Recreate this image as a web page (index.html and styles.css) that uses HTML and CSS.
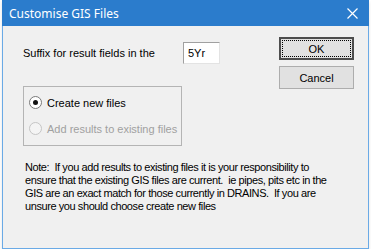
FILE: index.html
```html
<!DOCTYPE html>
<html lang="en">
<head>
  <meta charset="UTF-8" />
  <title>Customise GIS Files</title>
  <link rel="stylesheet" href="styles.css">
</head>
<body>

  <!-- DIALOG WINDOW -->
  <div class="window">
    <div class="titlebar">
      <span class="title">Customise GIS Files</span>
      <span class="close">
        <svg width="11" height="11" viewBox="0 0 11 11">
          <path d="M0.5 0.5 L10.5 10.5 M10.5 0.5 L0.5 10.5" stroke="#fff" stroke-width="1.2" fill="none"/>
        </svg>
      </span>
    </div>

    <div class="content">
      <div class="top">
        <div class="left">
          <div class="suffix-row">
            <label for="suffix">Suffix for result fields in the</label>
            <input type="text" id="suffix" value="5Yr">
          </div>

          <!-- Options -->
          <div class="group">
            <div class="radio-row">
              <span class="radio checked"></span>
              <span>Create new files</span>
            </div>
            <div class="radio-row disabled">
              <span class="radio"></span>
              <span>Add results to existing files</span>
            </div>
          </div>
        </div>

        <div class="buttons">
          <button class="btn default"><span class="focus">OK</span></button>
          <button class="btn">Cancel</button>
        </div>
      </div>

      <p class="note">Note:&nbsp; If you add results to existing files it is your responsibility to<br>ensure that the existing GIS files are current.&nbsp; ie pipes, pits etc in the<br>GIS are an exact match for those currently in DRAINS.&nbsp; If you are<br>unsure you should choose create new files</p>
    </div>
  </div>

</body>
</html>
```

FILE: styles.css
```css
body {
  margin: 0;
  background-color: #ffffff;
  font-family: "Liberation Sans", Arial, sans-serif;
  font-size: 11px;
  color: #000000;
}

/* WINDOW */
.window {
  box-sizing: border-box;
  width: 367px;
  height: 249px;
  margin-left: 2px;
  background-color: #f0f0f0;
  border: 1px solid #6aaae6;
  border-top: none;
  box-shadow: 0 2px 3px rgba(0,0,0,0.12);
}

.titlebar {
  height: 26px;
  margin: 0 -1px;
  background-color: #2b7ccc;
  display: flex;
  align-items: center;
  justify-content: space-between;
  padding: 0 10px 0 7px;
}

.title {
  font-family: "Noto Sans", "Open Sans", sans-serif;
  font-size: 12px;
  color: #ffffff;
}

.close {
  display: flex;
  margin-right: 1px;
}

/* CONTENT */
.content {
  padding: 11px 14px 0 20px;
}

.top {
  display: flex;
  justify-content: space-between;
}

.suffix-row {
  display: flex;
  align-items: center;
  height: 22px;
  margin-top: 5px;
}

.suffix-row label {
  width: 160px;
}

.suffix-row input {
  box-sizing: border-box;
  width: 37px;
  height: 22px;
  margin: 0;
  padding: 0 4px;
  font-family: inherit;
  font-size: 11px;
  background-color: #fff;
  border: 1px solid;
  border-color: #a0a0a0 #e3e3e3 #e3e3e3 #a0a0a0;
  outline: none;
}

/* GROUP BOX */
.group {
  box-sizing: border-box;
  width: 159px;
  height: 60px;
  margin-top: 22px;
  border: 1px solid #b4b4b4;
  padding: 9px 0 0 5px;
}

.radio-row {
  display: flex;
  align-items: center;
  gap: 5px;
  height: 13px;
}

.radio-row + .radio-row {
  margin-top: 13px;
}

.radio-row.disabled {
  color: #a0a0a0;
}

.radio {
  box-sizing: border-box;
  width: 13px;
  height: 13px;
  border-radius: 50%;
  border: 1px solid #7a7a7a;
  background-color: #fff;
  position: relative;
}

.radio.checked::after {
  content: "";
  position: absolute;
  left: 3px;
  top: 3px;
  width: 5px;
  height: 5px;
  border-radius: 50%;
  background-color: #111;
}

.disabled .radio {
  border-color: #c5c5c5;
  background-color: #f4f4f4;
}

/* BUTTONS */
.buttons {
  display: flex;
  flex-direction: column;
  gap: 6px;
}

.btn {
  box-sizing: border-box;
  width: 75px;
  height: 23px;
  margin: 0;
  padding: 0;
  font-family: inherit;
  font-size: 11px;
  color: #000;
  background-color: #e1e1e1;
  border: 1px solid #adadad;
}

.btn.default {
  border: 2px solid #4d4d4d;
  padding: 1px;
}

.btn .focus {
  display: flex;
  align-items: center;
  justify-content: center;
  height: 100%;
  border: 1px dotted #000;
  box-sizing: border-box;
}

/* NOTE */
.note {
  margin: 15px 0 0 2px;
  line-height: 13px;
  letter-spacing: -0.42px;
  white-space: nowrap;
}
```
